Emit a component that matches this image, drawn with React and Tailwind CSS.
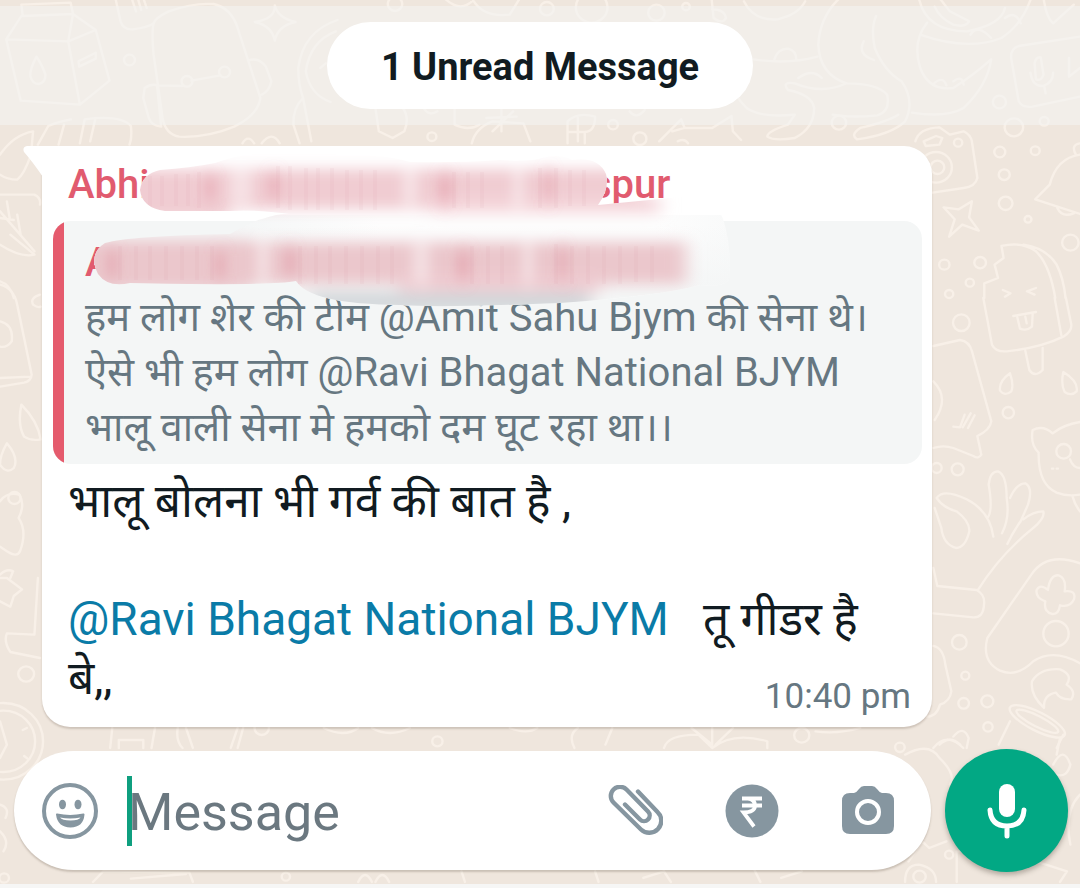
import React, { useState } from "react";

const Wallpaper = () => (
  <svg
    className="absolute inset-0 w-full h-full"
    viewBox="0 0 1080 888"
    preserveAspectRatio="xMidYMid slice"
    fill="none"
    stroke="#f8f0e8"
    strokeLinecap="round"
    strokeLinejoin="round"
    aria-hidden="true"
  >
    {/* top left: milk carton, backpack, star, headphones */}
    <g transform="scale(.3444 .3333)" strokeWidth="7">
      <path d="M62 20L205 14L212 48L66 54ZM62 54L18 124L198 130L212 48L278 96L318 248L232 320L60 308L18 124M198 130L232 320M198 130L278 96" />
      <path d="M106 176Q86 214 88 234Q94 258 112 258Q132 254 132 230Q124 204 106 176ZM228 190L278 164L278 182L230 206Z" />
      <circle cx="376" cy="186" r="16" />
      <path d="M335 0L350 70Q358 96 385 94Q430 88 446 76M382 0L395 40M400 0L410 36M416 0L426 30" />
      <path d="M446 76Q440 100 446 170L472 360Q480 408 520 416Q600 420 680 386Q750 350 756 300L690 90Q672 30 620 18Q560 14 490 40Q450 60 446 76ZM456 262L530 264M556 248L640 232M420 270Q440 256 456 262L468 386Q440 384 432 360L416 300ZM720 188Q750 176 772 206L788 250Q782 280 760 290" />
      <circle cx="543" cy="250" r="16" />
      <circle cx="652" cy="222" r="16" />
      <path d="M798 22Q800 62 740 72Q790 84 798 128Q806 84 858 72Q806 60 798 22Z" />
      <path d="M980 66Q880 100 866 210Q866 260 880 300Q850 330 852 380L870 436M880 300L904 430M975 100Q900 130 888 220Q900 290 960 312M930 210L946 196" />
      <path d="M0 470Q40 410 96 400L90 470Q70 530 50 545Q20 545 0 530M110 440L140 384Q170 370 206 364M170 440L186 380M232 436L246 364Q350 350 380 384Q384 420 376 440M262 430L276 366" />
      <path d="M0 590H100Q120 600 116 620M0 640L100 760M20 610L28 660M0 660L40 666M50 650L60 710M30 710L100 770Q60 780 0 740M0 850Q30 860 40 900" />
      <path d="M704 436Q720 408 738 436M760 436Q790 396 812 436M1090 330L1100 400L1140 420L1174 400Q1190 360 1170 330M1320 330V380Q1360 400 1392 380M1370 436Q1380 390 1430 370L1520 376L1540 430M1412 360L1500 356M1456 330V400M1430 400L1490 340" />
      <circle cx="1254" cy="416" r="13" />
      <circle cx="1147" cy="18" r="21" />
      <path d="M1230 330Q1245 356 1270 340M1290 0Q1340 50 1380 0M1370 0Q1400 60 1480 50L1510 0" />
    </g>
    {/* top right: whale, dinosaur, microphone card, camera, bell */}
    <g transform="translate(540 0) scale(.3444 .3333)" strokeWidth="7">
      <circle cx="20" cy="32" r="20" />
      <circle cx="150" cy="28" r="46" />
      <circle cx="338" cy="44" r="24" />
      <circle cx="424" cy="26" r="11" />
      <path d="M498 0L504 60Q530 80 540 60Q536 34 500 34M592 10Q620 70 690 64Q750 50 770 10M620 184Q720 200 806 176M680 186Q690 152 720 152Q744 158 744 184" />
      <path d="M866 4Q812 60 808 140Q812 230 890 256Q980 256 1008 290Q1018 340 980 352Q900 360 850 350M976 54Q960 90 972 150Q1000 220 1050 250Q1090 310 1060 370Q1020 410 920 424Q900 410 930 390Q1010 370 1040 350M890 256Q820 290 740 256Q700 250 720 276Q790 290 796 330Q796 390 740 420Q680 430 660 416Q660 400 720 380L740 350Q640 360 600 330Q580 310 570 290M940 130Q920 170 970 186M750 240Q790 210 818 240" />
      <path d="M1100 0Q1120 100 1240 100Q1340 80 1350 30M1124 74Q1080 130 1104 210Q1130 280 1200 270Q1260 230 1310 184Q1300 260 1230 330Q1180 360 1080 344M1104 110Q1240 160 1340 120Q1400 80 1426 0M1250 110Q1270 76 1310 120M1350 60Q1380 36 1396 76M1146 26Q1160 60 1200 80Q1236 90 1246 70L1190 40L1160 0M1462 0Q1470 60 1490 76L1550 20M1140 260Q1170 230 1180 262M1200 250Q1226 230 1230 260" />
      <path d="M1568 116L1390 144Q1366 152 1368 180L1390 310Q1400 330 1430 326L1568 296M1436 196Q1440 176 1454 178L1462 230Q1456 250 1440 244ZM1424 224Q1430 266 1460 264Q1490 254 1490 224M1464 264L1468 286M1536 180V236L1568 210" />
      <circle cx="1334" cy="312" r="19" />
      <circle cx="1376" cy="388" r="27" />
      <circle cx="1464" cy="370" r="13" />
      <circle cx="868" cy="374" r="21" />
      <circle cx="290" cy="422" r="19" />
      <circle cx="212" cy="380" r="14" />
      <path d="M80 436V370Q110 340 160 356Q160 400 130 402V436M80 402H130M110 360V430M260 340Q280 366 304 336M346 430L410 364L420 390H500L556 354L560 400L584 426M384 400L420 390M400 430Q420 420 430 436" />
      <path d="M1090 430Q1100 390 1160 388L1190 410L1230 400Q1250 410 1254 430L1270 540Q1264 566 1230 570L1140 584M1114 430L1150 414L1168 420L1160 440L1120 444Z" />
      <circle cx="1150" cy="508" r="46" />
      <circle cx="1154" cy="508" r="20" />
      <circle cx="1214" cy="434" r="12" />
      <circle cx="1335" cy="462" r="16" />
      <circle cx="1438" cy="458" r="13" />
      <circle cx="1348" cy="530" r="16" />
      <circle cx="1352" cy="616" r="20" />
      <circle cx="1417" cy="664" r="10" />
      <path d="M1172 628L1216 634L1254 610L1246 658L1274 698L1226 680L1188 716L1204 664ZM1568 470Q1500 480 1480 560L1438 604L1568 648M1502 630Q1516 660 1550 646M1556 470Q1540 440 1568 436" />
      <circle cx="1540" cy="734" r="24" />
      <circle cx="1278" cy="794" r="17" />
      <circle cx="1174" cy="800" r="15" />
      <circle cx="1248" cy="854" r="12" />
      <circle cx="1188" cy="888" r="12" />
      <path d="M1290 900V856L1330 840L1320 800L1346 780L1340 744Q1400 730 1440 760Q1480 800 1496 900M1404 740Q1470 750 1500 800Q1520 840 1526 900M1344 876L1366 886L1350 896M1440 870L1414 880L1436 890" />
    </g>
    {/* right edge: ice lolly, speech bubble, bear, plant, game pad */}
    <g transform="translate(900 300) scale(.3333)" strokeWidth="7">
      <path d="M250 0L276 140Q286 162 320 160Q420 150 490 116Q516 100 514 80L498 0M464 0L484 112M340 54L408 42M352 58L360 92Q380 100 396 86L398 48M376 56L380 76M376 158L388 216Q404 240 428 216V150" />
      <circle cx="184" cy="74" r="25" />
      <path d="M100 144L180 126Q208 130 216 160L274 370Q270 396 232 414L244 470Q236 484 220 474L160 450Q130 440 100 450M100 250Q150 300 104 366M160 386L180 388L194 350M188 388L212 346M204 390L224 352" />
      <path d="M330 226Q296 250 300 278Q314 296 334 280Q342 260 330 226ZM490 222Q482 260 494 282Q514 296 530 280Q536 250 490 222Z" />
      <circle cx="325" cy="344" r="17" />
      <circle cx="110" cy="510" r="15" />
      <circle cx="173" cy="514" r="18" />
      <path d="M540 372Q490 380 458 406Q430 380 398 396Q390 440 416 464Q414 560 470 584Q500 596 540 590M510 484Q520 510 540 510M456 512H460M470 512H474M518 596Q524 620 540 640" />
      <circle cx="491" cy="460" r="22" />
      <path d="M280 716Q270 640 200 604Q130 570 110 600Q130 630 170 640Q210 670 208 700Q196 750 168 750Q130 740 124 690L104 630M262 660Q280 640 266 560Q270 520 294 520Q320 530 320 600Q330 660 306 706M330 600Q350 556 376 556Q400 570 384 620L362 670Q340 700 322 738M370 664Q400 640 430 640Q436 660 400 690Q300 770 234 876M100 810L112 864L230 876Q256 890 252 920Q250 960 220 958L100 946" />
      <path d="M540 796Q440 760 394 830L262 1020Q244 1090 300 1118Q350 1140 400 1090Q460 1050 540 1096M444 876Q450 830 476 832Q500 840 494 880Q530 876 522 904Q510 930 480 922Q476 950 456 948Q430 940 436 910Q406 900 410 876Q420 856 444 876Z" />
      <circle cx="468" cy="1007" r="38" />
      <circle cx="178" cy="1033" r="22" />
      <circle cx="196" cy="1133" r="12" />
      <circle cx="191" cy="1216" r="16" />
      <circle cx="262" cy="1210" r="18" />
      <circle cx="264" cy="1287" r="14" />
      <path d="M100 1044Q130 1050 136 1100L154 1180Q150 1210 120 1220Q110 1256 80 1256M432 1230Q390 1190 396 1150Q420 1110 480 1114Q520 1130 500 1160Q530 1180 514 1204Q480 1206 468 1184Q430 1190 432 1230Z" />
      <ellipse cx="412" cy="1270" rx="92" ry="28" transform="rotate(27 412 1270)" />
      <ellipse cx="412" cy="1270" rx="70" ry="16" transform="rotate(27 412 1270)" />
      <path d="M330 1270L296 1340M490 1310L470 1350M100 1350Q140 1300 190 1350M160 1316Q190 1280 206 1320L200 1350" />
    </g>
    {/* left edge */}
    <g transform="translate(0 280) scale(.3444 .3333)" strokeWidth="7">
      <path d="M0 20Q40 30 50 80L92 290Q90 310 70 314L0 326M0 300L90 296M0 130Q40 140 34 190Q20 210 0 206M116 50Q86 60 96 80Q110 90 118 86M62 380Q50 440 70 476Q90 490 118 484Q110 430 62 380ZM20 496Q0 530 0 560Q20 590 40 570Q56 540 20 496Z" />
      <circle cx="42" cy="660" r="18" />
      <path d="M0 670Q20 640 56 650Q74 680 54 720Q80 760 58 820Q50 840 20 820L0 806M0 890Q20 870 38 880L30 900" />
    </g>
    {/* strip between the bubble and the composer */}
    <g transform="translate(0 580) scale(.3444 .3333)" strokeWidth="7">
      <path d="M0 0L20 0L64 34L40 54L30 86L0 70M110 0L100 170L20 166Q10 190 30 222L116 240M320 510L326 450M440 510L450 450M345 510V486H416V510M516 450Q510 490 530 510M540 450L560 510M690 450L670 510M706 450L690 510M940 450Q1000 480 1040 450M1080 450Q1130 480 1190 450M1480 450Q1530 470 1560 450" />
      <circle cx="76" cy="288" r="23" />
      <circle cx="10" cy="490" r="115" />
      <circle cx="10" cy="490" r="92" />
      <circle cx="760" cy="450" r="21" />
      <circle cx="1270" cy="490" r="15" />
      <path d="M0 430L20 500L0 540M66 456L78 450M70 534L80 542M0 680Q30 690 16 720M0 760Q30 790 10 820M270 912L300 880L550 884L560 912M380 902L540 888M1040 912Q1060 870 1080 912M1090 912Q1110 870 1130 912M1340 880L1350 912" />
      <circle cx="830" cy="896" r="12" />
      <circle cx="12" cy="900" r="14" />
    </g>
    <g transform="translate(540 580) scale(.3444 .3333)" strokeWidth="7">
      <path d="M110 450Q80 470 100 510M210 450L190 500M360 510Q370 470 460 470L500 510Q560 460 660 490V510M440 450L500 500M500 450V500M560 450L510 500M800 460Q860 470 930 450M1060 530Q1130 490 1160 540Q1210 590 1190 620M1160 500Q1190 470 1220 500M1510 480L1500 530M1490 560Q1520 500 1540 560Q1530 600 1500 590M1568 650Q1520 700 1540 800M1070 850L1110 790L1130 810L1180 790M1060 912Q1060 860 1100 860Q1150 870 1150 912M1210 912V820H1260M1440 850L1530 880L1510 912M160 880L170 912M300 900L360 880L380 912M620 870L640 912M700 900L760 880" />
      <circle cx="760" cy="472" r="22" />
      <circle cx="1045" cy="508" r="14" />
      <circle cx="1188" cy="830" r="12" />
      <circle cx="1102" cy="896" r="18" />
    </g>
  </svg>
);

/* Brushed-out sender name, laid over both name rows */
const Smudge = () => (
  <svg
    className="absolute left-[41px] top-0 pointer-events-none"
    width="700"
    height="170"
    viewBox="83 146 700 170"
    aria-hidden="true"
  >
    <defs>
      <clipPath id="brush">
        <path d="M140 190Q142 174 160 170Q190 168 215 163Q240 154 262 153Q310 151 345 155Q385 154 410 162Q460 163 500 160Q530 162 542 158Q560 153 572 160Q598 156 606 174Q610 188 598 205L690 196Q718 200 724 222Q732 250 729 280Q722 288 700 285Q660 296 560 303Q440 308 400 305Q310 304 296 281Q270 286 130 283Q108 288 98 274Q88 254 105 243Q130 236 230 234Q250 222 262 219Q280 213 292 214Q250 209 230 211L165 211Q142 208 140 190Z" />
      </clipPath>
      <linearGradient id="brushMiddle" gradientUnits="userSpaceOnUse" x1="230" y1="0" x2="730" y2="0">
        <stop offset="0" stopColor="#f4f6f6" />
        <stop offset=".3" stopColor="#fdfdfd" />
        <stop offset=".85" stopColor="#fdfdfd" />
        <stop offset="1" stopColor="#f9fafa" />
      </linearGradient>
      <linearGradient id="brushLow" gradientUnits="userSpaceOnUse" x1="0" y1="225" x2="0" y2="290">
        <stop offset="0" stopColor="#f4f6f6" stopOpacity="0" />
        <stop offset="1" stopColor="#f4f6f6" />
      </linearGradient>
      <filter id="soft" x="-10%" y="-30%" width="120%" height="160%">
        <feGaussianBlur stdDeviation="9 7" />
      </filter>
      <filter id="streak" x="-10%" y="-30%" width="120%" height="160%">
        <feGaussianBlur stdDeviation="6 9" />
      </filter>
    </defs>
    <g clipPath="url(#brush)">
      <rect x="83" y="146" width="660" height="69" fill="#fff" />
      <rect x="83" y="215" width="660" height="100" fill="url(#brushMiddle)" />
      <rect x="83" y="215" width="660" height="100" fill="url(#brushLow)" />
      <g filter="url(#soft)">
        <rect x="310" y="292" width="280" height="20" fill="#d3d7da" />
        <rect x="110" y="169" width="120" height="50" fill="#f0ccd2" />
        <rect x="110" y="169" width="530" height="40" fill="#f0ccd2" />
        <rect x="430" y="197" width="230" height="16" fill="#f4d5da" />
        <rect x="70" y="242" width="616" height="42" fill="#ebc7cc" />
        <rect x="70" y="240" width="180" height="50" fill="#ebc7cc" />
        <rect x="400" y="276" width="200" height="16" fill="#efccd2" />
      </g>
      <g filter="url(#streak)" fill="#fff" fillOpacity=".4">
        <rect x="230" y="160" width="22" height="50" />
        <rect x="402" y="160" width="16" height="50" />
        <rect x="512" y="160" width="12" height="50" />
        <rect x="256" y="238" width="14" height="46" />
        <rect x="412" y="238" width="18" height="46" />
        <rect x="522" y="238" width="12" height="46" />
      </g>
      <g filter="url(#streak)" fill="#dd8291" fillOpacity=".38">
        <rect x="204" y="178" width="12" height="20" />
        <rect x="268" y="176" width="12" height="20" />
        <rect x="438" y="176" width="14" height="26" />
        <rect x="544" y="172" width="9" height="28" />
        <rect x="106" y="252" width="12" height="24" />
        <rect x="214" y="254" width="12" height="22" />
        <rect x="284" y="250" width="12" height="24" />
        <rect x="456" y="252" width="14" height="26" />
        <rect x="558" y="248" width="9" height="30" />
      </g>
      {/* fine bristle marks */}
      <path
        d="M150 176V206M162 176V206M176 174V206M188 174V206M199 172V208M278 166V208M290 166V210M306 168V210M318 168V210M332 168V210M347 170V210M361 170V210M375 170V210M454 172V208M468 172V208M482 172V208M540 168V208M556 168V208M570 170V206M584 170V206M120 246V280M136 246V280M150 246V280M166 246V280M182 246V280M197 246V280M212 246V280M300 246V284M316 246V284M330 246V284M346 246V284M362 246V284M378 246V284M392 246V284M472 246V284M488 246V284M502 246V284M556 244V284M572 246V284M588 246V284M604 246V284M620 246V284M636 246V282M652 246V282"
        stroke="#d98d9a"
        strokeOpacity=".07"
        strokeWidth="4"
      />
    </g>
  </svg>
);

const SmileIcon = () => (
  <svg width="56" height="56" viewBox="0 0 56 56" fill="none" aria-hidden="true">
    <circle cx="28" cy="28" r="26" stroke="#8696a0" strokeWidth="4" />
    <ellipse cx="20.500" cy="21.500" rx="3.500" ry="4.800" fill="#8696a0" />
    <ellipse cx="36" cy="21.500" rx="3.500" ry="4.800" fill="#8696a0" />
    <path
      d="M15 31.500Q28 34.500 41.500 31.500Q40.500 43.500 28.500 43.500Q16.500 43.500 15 31.500Z"
      fill="#8696a0"
      stroke="#8696a0"
      strokeWidth="2"
      strokeLinejoin="round"
    />
    <path d="M18 34.500Q28 36.500 38.500 34.500Q37 37.500 28.500 37.500Q20 37.500 18 34.500Z" fill="#fff" />
  </svg>
);

const ClipIcon = () => (
  <svg width="56" height="52" viewBox="0 0 56 52" fill="none" aria-hidden="true">
    <path
      d="M31 6.500L50.500 27A11.500 11.500 0 0 1 34 44.500L6.500 17.500A9 9 0 0 1 19.500 4.500L41 26.500A5.500 5.500 0 0 1 33 34.500L18 19.500"
      stroke="#8696a0"
      strokeWidth="4.400"
      strokeLinecap="round"
    />
  </svg>
);

const RupeeIcon = () => (
  <svg width="54" height="54" viewBox="0 0 54 54" fill="none" aria-hidden="true">
    <circle cx="27" cy="27" r="26.500" fill="#8696a0" />
    <path
      d="M17 14.500H37M17 21.500H37M17 14.500H23Q30 15.500 30 21.500Q30 28.500 18.500 28.500L29 42.500"
      stroke="#fff"
      strokeWidth="3.800"
    />
  </svg>
);

const CameraIcon = () => (
  <svg width="54" height="52" viewBox="0 0 54 52" fill="none" aria-hidden="true">
    <path
      d="M9 8H13Q16 7 18 4Q20 1 23 1H31Q34 1 36 4Q38 7 41 8H45Q53 8 53 16V41Q53 49 45 49H9Q1 49 1 41V16Q1 8 9 8Z"
      fill="#8696a0"
    />
    <circle cx="27" cy="27" r="11" stroke="#fff" strokeWidth="4" />
  </svg>
);

const MicIcon = () => (
  <svg width="40" height="56" viewBox="0 0 40 56" fill="none" aria-hidden="true">
    <rect x="12" y="1" width="16" height="33" rx="8" fill="#fff" />
    <path
      d="M3 27Q4 43 20 43Q36 43 37 27M20 43V53"
      stroke="#fff"
      strokeWidth="5"
      strokeLinecap="round"
    />
  </svg>
);

const quoteLines = [
  "हम लोग शेर की टीम @Amit Sahu Bjym की सेना थे।",
  "ऐसे भी हम लोग @Ravi Bhagat National BJYM",
  "भालू वाली सेना मे हमको दम घूट रहा था।।",
];

const Message = () => (
  <article className="relative ml-[42px] mr-[148px] bg-white rounded-[28px] rounded-tl-none shadow-[0_2px_2px_rgba(90,75,60,0.22)] pt-[11px] pl-[11px] pr-[10px] pb-[10px]">
    <svg
      className="absolute -left-[19px] top-0"
      width="20"
      height="32"
      viewBox="0 0 20 32"
      aria-hidden="true"
    >
      <path d="M20 0H4Q-1 1 1 6Q9 15 20 31Z" fill="#fff" />
    </svg>

    <div className="flex h-[64px] pl-[15px] text-[40px] leading-[55px] font-medium text-[#e15b6f]">
      <span className="w-[523px]">Abhi</span>
      <span>spur</span>
    </div>

    <blockquote className="flex rounded-[18px] overflow-hidden bg-[#f4f6f6]">
      <div className="w-[11px] shrink-0 bg-[#e55b6d]" />
      <div className="pl-[21px] pt-[14px] pb-[9px] text-[40px] leading-[55px] text-[#667781]">
        <div className="font-medium text-[#e15b6f]">A</div>
        {quoteLines.map((line) => (
          <p key={line}>{line}</p>
        ))}
      </div>
    </blockquote>

    <Smudge />

    <div className="mt-2 pl-[15px] pr-[11px] text-[46px] leading-[59px] text-[#111b21]">
      <p>भालू बोलना भी गर्व की बात है ,</p>
      <br />
      <p className="whitespace-pre-wrap">
        <a href="#ravi" className="text-[#0a7ba7]">
          @Ravi Bhagat National BJYM
        </a>
        {"   तू गीडर है"}
      </p>
      <div className="flex justify-between h-[68px]">
        <p>बे,,</p>
        <time className="self-end text-[35px] leading-[40px] text-[#667781]">10:40 pm</time>
      </div>
    </div>
  </article>
);

const Composer = () => {
  const [text, setText] = useState("");

  return (
    <footer className="flex items-center gap-[14px] pl-[14px] pr-3 pb-3">
      <div className="flex flex-1 min-w-0 items-center h-[119px] bg-white rounded-full pl-7 pr-9 shadow-[0_2px_2px_rgba(90,75,60,0.25)]">
        <button aria-label="Emoji" className="shrink-0">
          <SmileIcon />
        </button>
        {!text && <span className="ml-[29px] w-[5px] h-[70px] shrink-0 bg-[#0f9f7f]" />}
        <input
          type="text"
          aria-label="Message"
          placeholder="Message"
          value={text}
          onChange={(e) => setText(e.target.value)}
          className="-ml-1 pt-1 flex-1 min-w-0 h-[80px] text-[52px] text-[#111b21] placeholder:text-[#6b7880] outline-none"
        />
        <div className="flex items-center gap-[62px] shrink-0">
          <button aria-label="Attach">
            <ClipIcon />
          </button>
          <button aria-label="Payment">
            <RupeeIcon />
          </button>
          <button aria-label="Camera">
            <CameraIcon />
          </button>
        </div>
      </div>
      <button
        aria-label="Voice message"
        className="flex items-center justify-center w-[123px] h-[123px] shrink-0 rounded-full bg-[#02a884] shadow-[0_3px_5px_rgba(70,60,50,0.35)]"
      >
        <MicIcon />
      </button>
    </footer>
  );
};

const App = () => {
  return (
    <div className="relative min-h-screen flex flex-col overflow-hidden bg-[#efe6dd] border-b-4 border-[#f6f6f5] font-[Roboto,'Noto_Sans_Devanagari','Noto_Sans',sans-serif]">
      <Wallpaper />
      <div className="relative flex flex-col flex-1">
        <header className="mt-[6px] py-4 flex justify-center bg-[#f4f3f1]/60">
          <div className="px-[54px] pt-1 rounded-full bg-white text-[38px] leading-[83px] font-bold text-[#111b21]">
            1 Unread Message
          </div>
        </header>
        <main className="flex-1 pt-[21px] pb-[22px]">
          <Message />
        </main>
        <Composer />
      </div>
    </div>
  );
};

export default App;
